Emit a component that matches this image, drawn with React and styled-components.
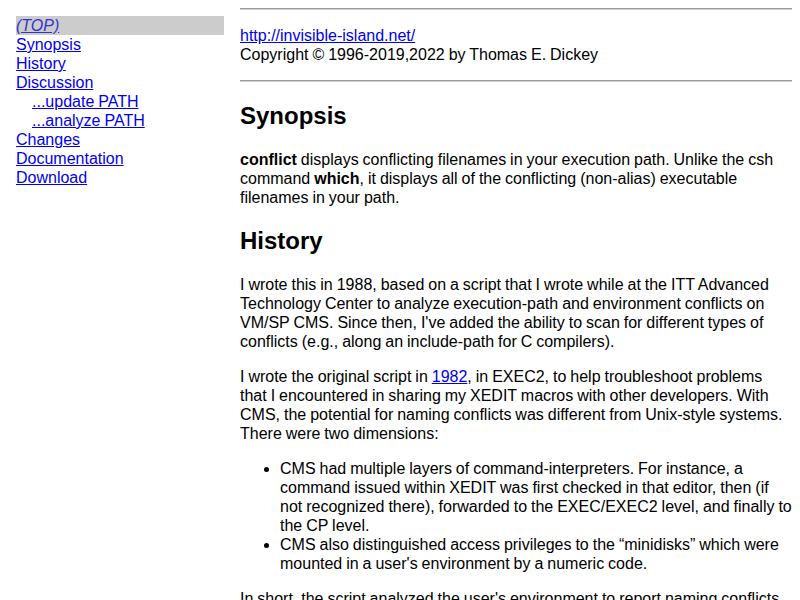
import React from "react";
import styled, { createGlobalStyle } from "styled-components";

const Global = createGlobalStyle`
  html, body { margin: 0; padding: 0; background: #fff; }
  body {
    font-family: "Liberation Sans", Arial, sans-serif;
    font-size: 16px;
    line-height: 19px;
    word-spacing: -0.5px;
    color: #000;
  }
  a { color: #0000ee; }
`;

const Page = styled.div`
  display: flex;
  align-items: flex-start;
  gap: 16px;
  padding: 0 8px 0 16px;
`;

const Nav = styled.nav`
  width: 208px;
  flex: none;
  margin-top: 16px;
  display: flex;
  flex-direction: column;
`;

const NavItem = styled.a`
  display: block;
  height: 19px;
  box-sizing: border-box;
  padding-top: 1px;
  line-height: 18px;
  padding-left: ${(p) => (p.$sub ? "16px" : "0")};
  background: ${(p) => (p.$current ? "#cccccc" : "transparent")};
  font-style: ${(p) => (p.$current ? "italic" : "normal")};
  color: ${(p) => (p.$current ? "#3333cc" : "#0000ee")};
  text-decoration: none;
  & span { text-decoration: underline; }
`;

const Main = styled.main`
  flex: 1;
  min-width: 0;
`;

const Rule = styled.hr`
  border: none;
  border-top: 1px solid #9a9a9a;
  border-bottom: 1px solid #d0d0d0;
  height: 0;
  margin: 8px 0;
`;

const Para = styled.p`
  margin: 16px 0;
`;

const Heading = styled.h2`
  font-family: "Liberation Sans", Arial, sans-serif;
  font-size: 24px;
  line-height: 28px;
  font-weight: bold;
  word-spacing: normal;
  margin: 20px 0;
`;

const List = styled.ul`
  margin: 16px 0;
  padding-left: 40px;
`;

const navItems = [
  { label: "(TOP)", current: true },
  { label: "Synopsis" },
  { label: "History" },
  { label: "Discussion" },
  { label: "...update PATH", sub: true },
  { label: "...analyze PATH", sub: true },
  { label: "Changes" },
  { label: "Documentation" },
  { label: "Download" },
];

export default function App() {
  return (
    <>
      <Global />
      <Page>
        <Nav>
          {navItems.map((it) => (
            <NavItem key={it.label} href="#" $sub={it.sub} $current={it.current}>
              <span>{it.label}</span>
            </NavItem>
          ))}
        </Nav>
        <Main>
          <Rule />
          <Para>
            <a href="#">http://invisible-island.net/</a>
            <br />
            Copyright © 1996-2019,2022 by Thomas E. Dickey
          </Para>
          <Rule />
          <Heading>Synopsis</Heading>
          <Para>
            <b>conflict</b> displays conflicting filenames in your execution path. Unlike the csh
            command <b>which</b>, it displays all of the conflicting (non-alias) executable
            filenames in your path.
          </Para>
          <Heading>History</Heading>
          <Para>
            I wrote this in 1988, based on a script that I wrote while at the ITT Advanced
            Technology Center to analyze execution-path and environment conflicts on VM/SP CMS.
            Since then, I've added the ability to scan for different types of conflicts (e.g.,
            along an include-path for C compilers).
          </Para>
          <Para>
            I wrote the original script in <a href="#">1982</a>, in EXEC2, to help troubleshoot
            problems that I encountered in sharing my XEDIT macros with other developers. With
            CMS, the potential for naming conflicts was different from Unix-style systems. There
            were two dimensions:
          </Para>
          <List>
            <li>
              CMS had multiple layers of command-interpreters. For instance, a command issued
              within XEDIT was first checked in that editor, then (if not recognized there),
              forwarded to the EXEC/EXEC2 level, and finally to the CP level.
            </li>
            <li>
              CMS also distinguished access privileges to the “minidisks” which were mounted in a
              user's environment by a numeric code.
            </li>
          </List>
          <Para>
            In short, the script analyzed the user's environment to report naming conflicts
            which might cause problems.
          </Para>
        </Main>
      </Page>
    </>
  );
}
